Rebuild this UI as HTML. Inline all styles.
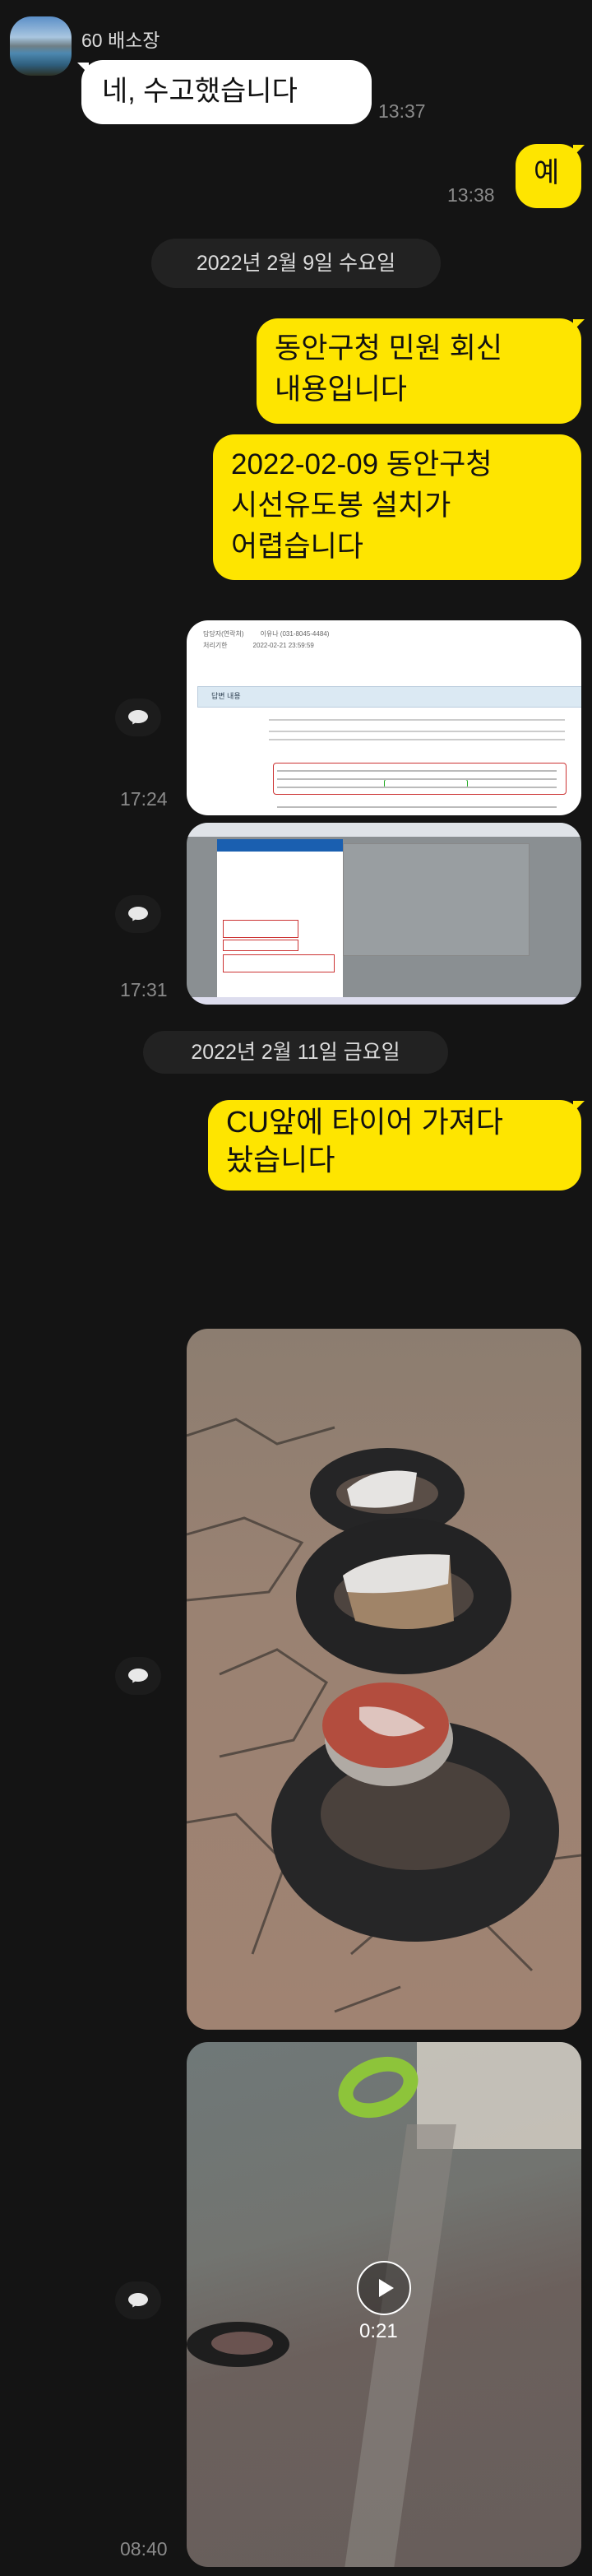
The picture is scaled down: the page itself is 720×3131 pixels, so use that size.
<!DOCTYPE html>
<html><head><meta charset="utf-8"><style>
body{margin:0;width:720px;height:3131px;background:#141414;position:relative;overflow:hidden;font-family:"Liberation Sans","Noto Sans CJK KR",sans-serif}
.a{position:absolute}
.bub{position:absolute;border-radius:26px;color:#111;font-size:35px;line-height:50px;box-sizing:border-box}
.y{background:#fee500}
.w{background:#fff}
.t{position:absolute;color:#8a8a8a;font-size:23px}
.pill{position:absolute;background:#222;border-radius:30px;color:#ddd;font-size:25px;text-align:center}
.sh{position:absolute;width:56px;height:46px;border-radius:28px;background:#1c1c1c}
.sh i{position:absolute;left:16px;top:14px;width:24px;height:16px;border-radius:50%;background:#e8e8e8}
.sh b{position:absolute;left:19px;top:25px;width:0;height:0;border-left:4px solid transparent;border-right:4px solid transparent;border-top:7px solid #e8e8e8;transform:rotate(30deg)}
.img{position:absolute;left:227px;width:480px;border-radius:26px;overflow:hidden}
</style></head><body>
<div class="a" style="left:12px;top:20px;width:75px;height:72px;border-radius:26px;background:linear-gradient(#5b8fc7 0%,#a9c6e0 35%,#6f7f86 50%,#4d88b0 62%,#2e5d7c 82%,#2c3024 100%)"></div>
<div class="a" style="left:99px;top:30px;color:#ddd;font-size:23px">60 배소장</div>
<div class="a" style="left:94px;top:76px;width:0;height:0;border-right:14px solid #fff;border-bottom:14px solid transparent;border-left:0"></div>
<div class="bub w" style="left:99px;top:73px;width:353px;height:78px;padding:13px 25px;font-size:34px">네, 수고했습니다</div>
<div class="t" style="left:460px;top:122px">13:37</div>
<div class="bub y" style="left:627px;top:175px;width:80px;height:78px;padding:10px 0 0 22px;font-size:34px">예</div>
<div class="a" style="left:697px;top:176px;border-left:14px solid #fee500;border-bottom:14px solid transparent"></div>
<div class="t" style="left:544px;top:224px">13:38</div>
<div class="pill" style="left:184px;top:290px;width:352px;height:60px;line-height:60px">2022년 2월 9일 수요일</div>
<div class="bub y" style="left:312px;top:387px;width:395px;height:128px;padding:12px 22px">동안구청 민원 회신<br>내용입니다</div>
<div class="a" style="left:697px;top:388px;border-left:14px solid #fee500;border-bottom:14px solid transparent"></div>
<div class="bub y" style="left:259px;top:528px;width:448px;height:177px;padding:12px 22px">2022-02-09 동안구청<br>시선유도봉 설치가<br>어렵습니다</div>
<div class="img" style="top:754px;height:237px;background:#fff">
<div class="a" style="left:20px;top:10px;width:440px;font-size:8px;color:#666;line-height:14px">담당자(연락처) &nbsp;&nbsp;&nbsp;&nbsp;&nbsp;&nbsp;&nbsp; 이유나 (031-8045-4484)<br>처리기한 &nbsp;&nbsp;&nbsp;&nbsp;&nbsp;&nbsp;&nbsp;&nbsp;&nbsp;&nbsp;&nbsp;&nbsp; 2022-02-21 23:59:59</div>
<div class="a" style="left:13px;top:80px;width:467px;height:24px;background:#dbe9f3;border:1px solid #bcd"></div>
<div class="a" style="left:30px;top:85px;font-size:9px;color:#345">답변 내용</div>
<div class="a" style="left:100px;top:120px;width:360px;height:2px;background:#ccc;box-shadow:0 14px #ccc,0 24px #ccc"></div>
<div class="a" style="left:105px;top:173px;width:355px;height:37px;border:1.5px solid #c33;border-radius:4px"></div>
<div class="a" style="left:240px;top:193px;width:100px;height:9px;border:1.5px solid #2a2;border-radius:3px"></div>
<div class="a" style="left:110px;top:182px;width:340px;height:2px;background:#bbb;box-shadow:0 10px #bbb,0 20px #bbb,0 44px #bbb"></div>
</div>
<div class="sh" style="left:140px;top:849px"><i></i><b></b></div>
<div class="t" style="left:146px;top:958px">17:24</div>
<div class="img" style="top:1000px;height:221px;background:#8a8f92">
<div class="a" style="left:0;top:0;width:480px;height:17px;background:#dfe3e8"></div>
<div class="a" style="left:190px;top:25px;width:225px;height:135px;background:#999ea1;border:1px solid #888"></div>
<div class="a" style="left:37px;top:20px;width:153px;height:200px;background:#fff"></div>
<div class="a" style="left:37px;top:20px;width:153px;height:15px;background:#1a5fb0"></div>
<div class="a" style="left:44px;top:118px;width:90px;height:20px;border:1.2px solid #c33"></div>
<div class="a" style="left:44px;top:142px;width:90px;height:12px;border:1.2px solid #c33"></div>
<div class="a" style="left:44px;top:160px;width:134px;height:20px;border:1.2px solid #c33"></div>
<div class="a" style="left:0;top:212px;width:480px;height:9px;background:#dde"></div>
</div>
<div class="sh" style="left:140px;top:1088px"><i></i><b></b></div>
<div class="t" style="left:146px;top:1190px">17:31</div>
<div class="pill" style="left:174px;top:1253px;width:371px;height:52px;line-height:52px">2022년 2월 11일 금요일</div>
<div class="bub y" style="left:253px;top:1337px;width:454px;height:110px;padding:4px 22px;font-size:36px;line-height:46px">CU앞에 타이어 가져다<br>놨습니다</div>
<div class="a" style="left:697px;top:1338px;border-left:14px solid #fee500;border-bottom:14px solid transparent"></div>
<div class="img" style="top:1615px;height:852px;background:linear-gradient(#8c7d70,#9a8272 40%,#a08372 100%)">
<svg class="a" style="left:0;top:0" width="480" height="852">
<g fill="none" stroke="#3a3530" stroke-width="3" opacity=".7">
<path d="M0 130 L60 110 L110 140 L180 120 M0 250 L70 230 L140 260 L100 320 L0 330 M40 420 L110 390 L170 430 L130 500 L40 520 M0 600 L60 590 L120 650 L80 760 M200 760 L270 700 L360 720 L420 780 M360 720 L400 650 L480 640 M120 650 L220 640 M180 830 L260 800"/>
</g>
<ellipse cx="244" cy="200" rx="94" ry="55" fill="#252526"/>
<ellipse cx="244" cy="200" rx="62" ry="25" fill="#5a4e47"/>
<path d="M195 195 Q230 165 280 175 L275 210 Q240 222 200 215Z" fill="#e6e4e2"/>
<ellipse cx="264" cy="325" rx="131" ry="95" fill="#232324"/>
<ellipse cx="264" cy="325" rx="85" ry="38" fill="#4d443f"/>
<path d="M190 300 Q230 270 320 275 L325 355 Q270 375 205 355Z" fill="#a08468"/>
<path d="M190 300 Q230 270 320 275 L318 310 Q260 325 195 320Z" fill="#e3e1df"/>
<ellipse cx="278" cy="610" rx="175" ry="135" fill="#262627"/>
<ellipse cx="278" cy="590" rx="115" ry="68" fill="#4a413c"/>
<ellipse cx="246" cy="498" rx="78" ry="58" fill="#b0aaa4"/>
<ellipse cx="242" cy="482" rx="77" ry="52" fill="#b34d3e"/>
<path d="M210 460 Q250 455 290 485 Q240 510 210 475Z" fill="#e8e2de" opacity=".8"/>
</svg>
</div>
<div class="sh" style="left:140px;top:2014px"><i></i><b></b></div>
<div class="img" style="top:2482px;height:638px;background:linear-gradient(165deg,#6f7878 0%,#727470 35%,#6b605c 55%,#675e5b 100%)">
<div class="a" style="left:280px;top:0;width:200px;height:130px;background:#d8d2c8;opacity:.8"></div>
<div class="a" style="left:183px;top:20px;width:100px;height:70px;border:18px solid #8dc43a;border-radius:50%;transform:rotate(-20deg);box-sizing:border-box"></div>
<div class="a" style="left:230px;top:100px;width:60px;height:540px;background:#8a8580;transform:skewX(-8deg);opacity:.6"></div>
<div class="a" style="left:0px;top:340px;width:125px;height:55px;background:#1e1e1e;border-radius:50%"></div>
<div class="a" style="left:30px;top:352px;width:75px;height:28px;background:#6a5350;border-radius:50%"></div>
<div class="a" style="left:207px;top:266px;width:66px;height:66px;border:2.5px solid #fff;border-radius:50%;box-sizing:border-box;background:rgba(0,0,0,.35)"></div>
<div class="a" style="left:234px;top:288px;border-left:18px solid #fff;border-top:11px solid transparent;border-bottom:11px solid transparent"></div>
<div class="a" style="left:210px;top:338px;color:#fff;font-size:24px">0:21</div>
</div>
<div class="sh" style="left:140px;top:2773px"><i></i><b></b></div>
<div class="t" style="left:146px;top:3085px">08:40</div>
</body></html>
